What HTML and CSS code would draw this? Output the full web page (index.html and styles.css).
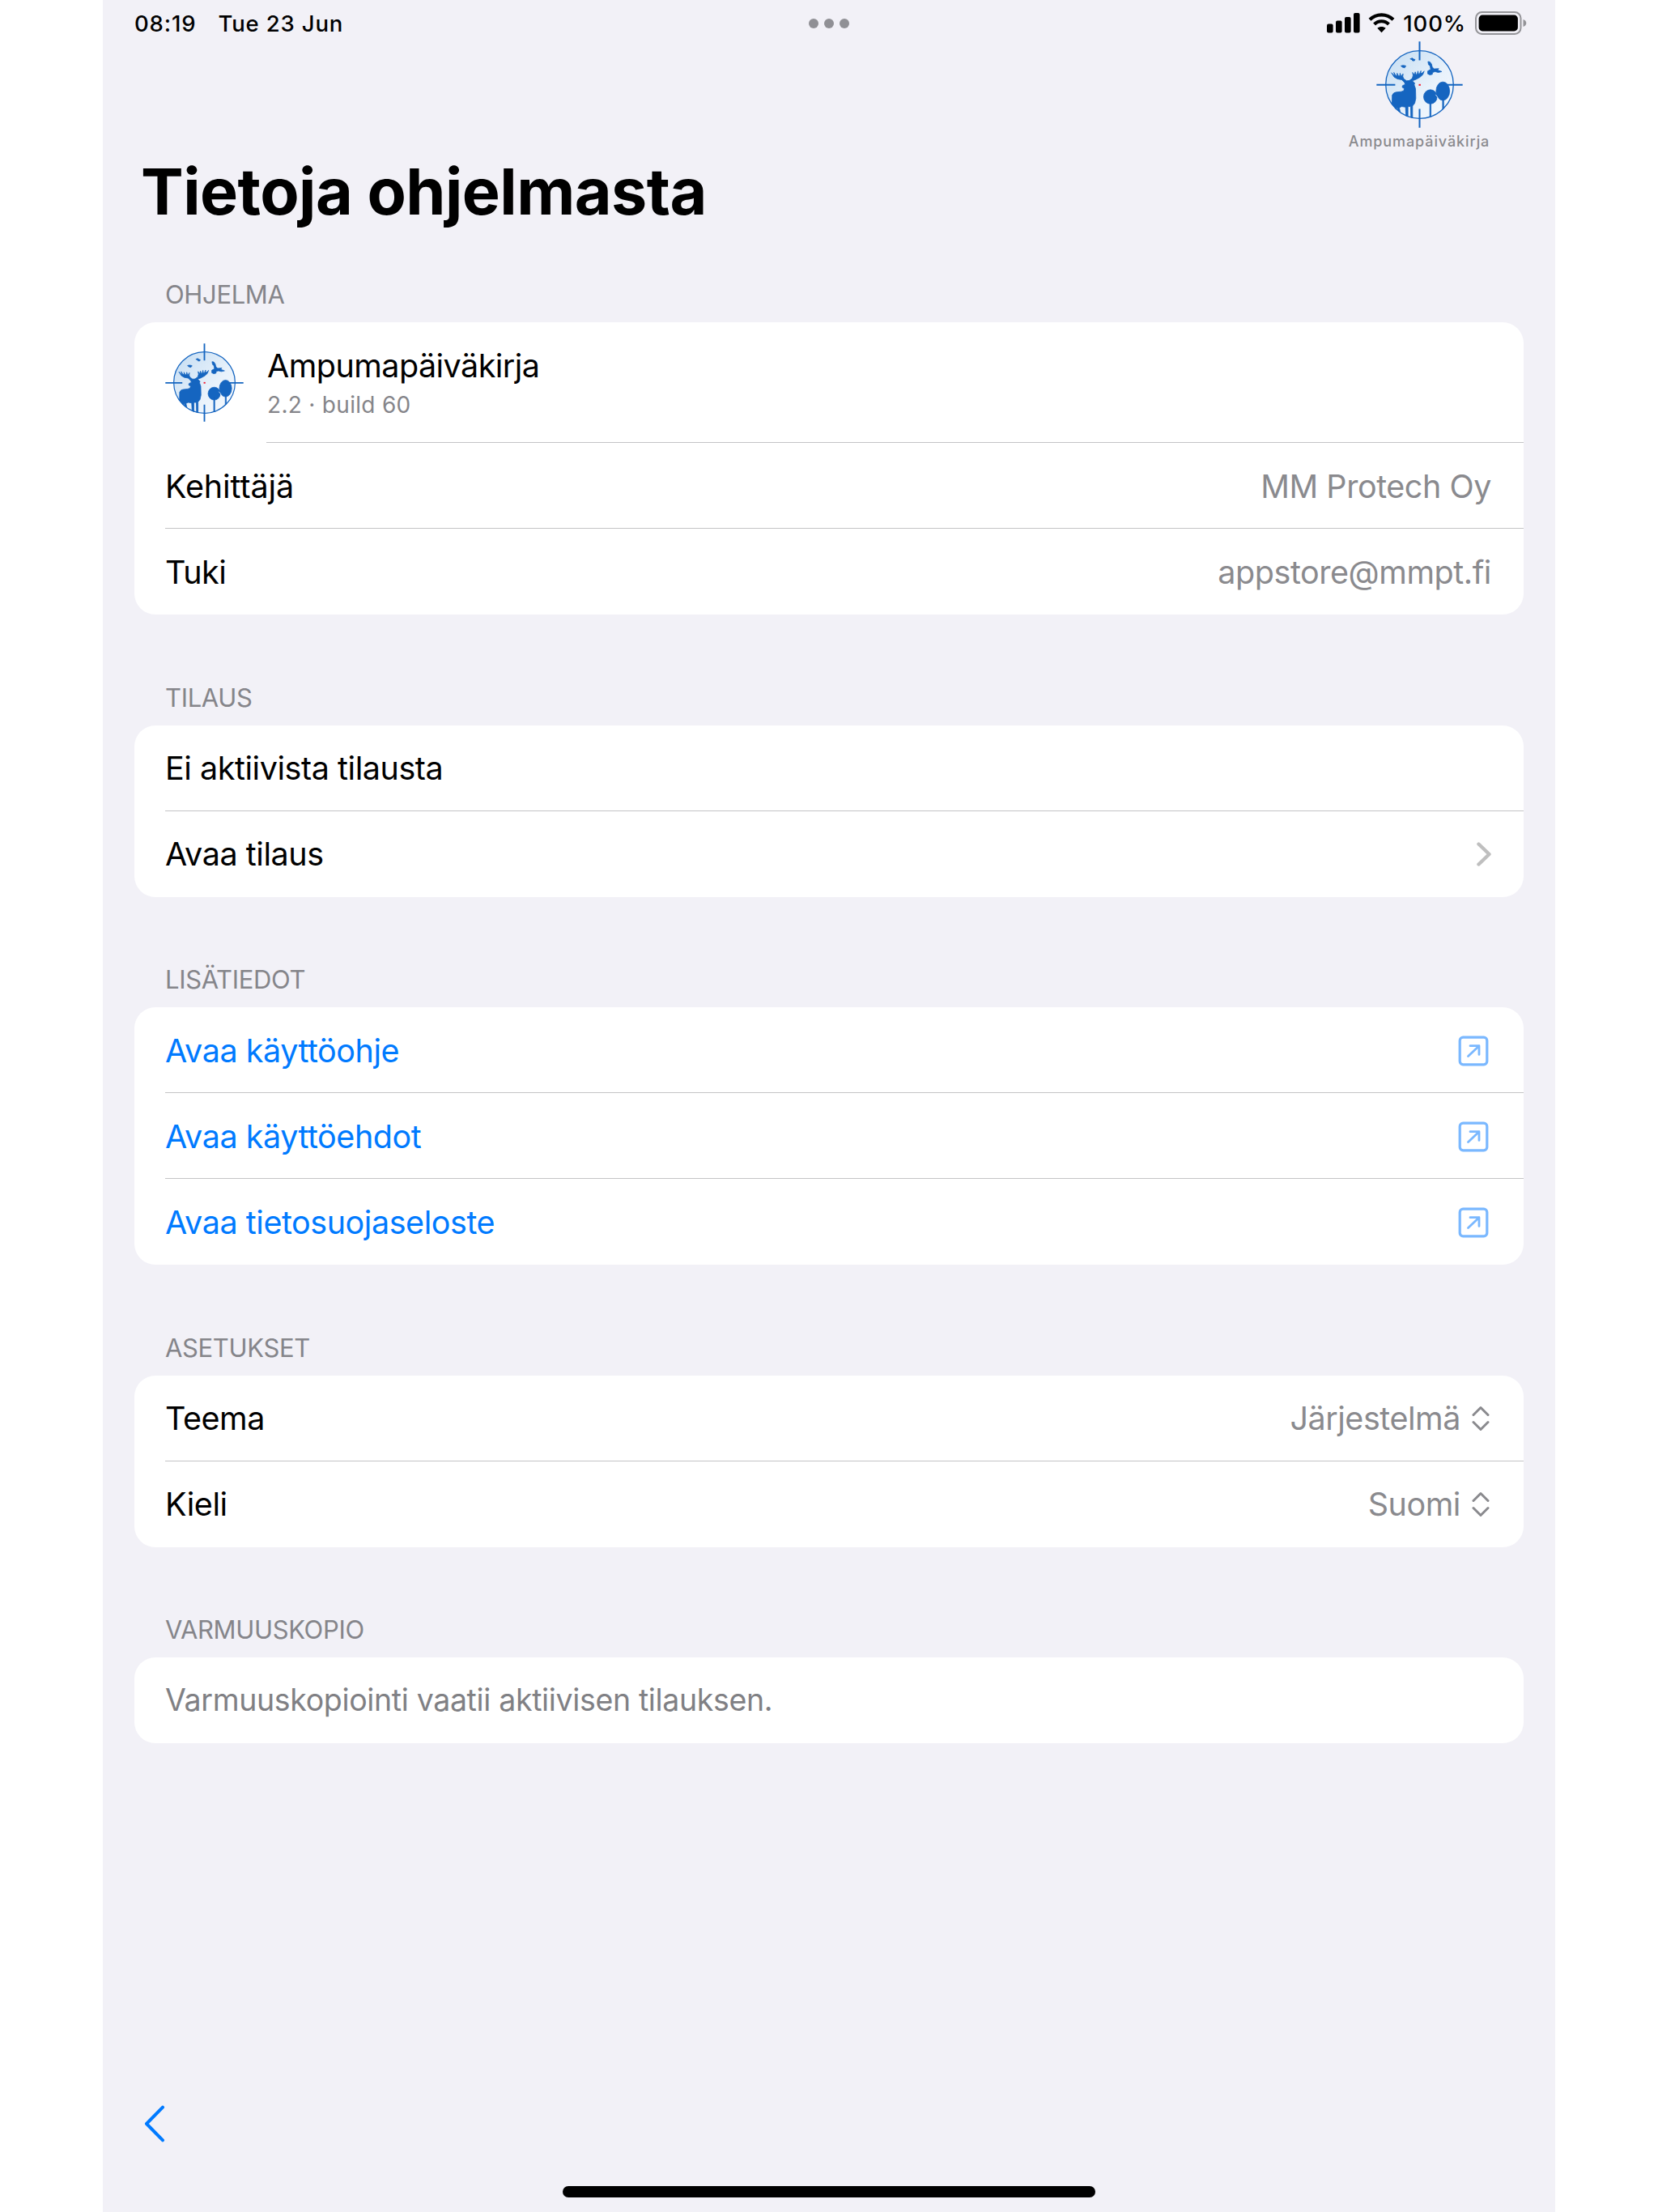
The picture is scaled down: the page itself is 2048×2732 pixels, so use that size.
FILE: index.html
```html
<!DOCTYPE html>
<html lang="fi">
  <head>
    <meta charset="UTF-8">
    <title>Ampumapäiväkirja</title>
    <link rel="stylesheet" href="styles.css">
  </head>
  <body>
    <!-- Shared icons -->
    <svg class="defs" width="0" height="0">
      <linearGradient id="sky" x1="0" y1="0" x2="1" y2="1">
        <stop offset="0" stop-color="#c3dcf2"/>
        <stop offset="0.6" stop-color="#e9f2fb"/>
        <stop offset="1" stop-color="#f6fafe"/>
      </linearGradient>
      <clipPath id="scope"><circle cx="190" cy="179" r="126"/></clipPath>
      <symbol id="logo" viewBox="30 19 320 320">
        <circle cx="190" cy="179" r="125" fill="url(#sky)" stroke="#1565c0" stroke-width="4"/>
        <g clip-path="url(#scope)" fill="#1565c0" stroke="#1565c0" stroke-width="2.5" stroke-linejoin="round">
          <!-- Moose -->
          <path d="M89 218 Q94 207 104 207 L122 205 L131 202 L134 194 L126 189 L127 183 L137 178 L134 171 L124 161 L108 158 L96 151 L86 135 L93 142 L98 147 L95 134 L102 145 L107 147 L107 137 L112 147 L117 147 L118 137 L122 149 L129 139 L128 150 L132 158 L142 165 L152 164 L163 156 L166 145 L164 134 L171 143 L174 132 L177 142 L181 141 L184 129 L186 140 L190 139 L195 128 L194 138 L200 136 L207 129 L202 142 L191 152 L176 160 L163 165 L172 174 L170 180 L175 194 L176 230 L172 248 L164 258 L164 302 L158 302 L157 260 L147 260 L147 300 L140 298 L138 262 L124 260 L115 264 L118 279 L111 277 L107 262 L100 284 L88 262 Z"/>
          <!-- Trees -->
          <ellipse cx="230" cy="224" rx="25" ry="26"/>
          <ellipse cx="276" cy="203" rx="25" ry="34"/>
          <rect x="228" y="240" width="4" height="70"/>
          <rect x="275" y="230" width="4" height="60"/>
          <path d="M249 216 L257 226 L256 232" fill="none" stroke="#e9f2fb"/>
          <!-- Birds -->
          <path d="M221 94 L228 95 L234 103 L237 115 L244 121 L261 120 L256 125 L272 131 L259 134 L247 131 L238 134 L237 141 L228 143 L220 139 L220 129 L231 123 L229 111 L223 105 Z"/>
          <path d="M121 110 L128 108 L136 109 L140 111 L136 114 L135 117 L127 115 Z"/>
          <path d="M155 84 L163 81 L168 85 L173 86 L171 91 L164 91 L162 87 Z"/>
        </g>
        <path d="M190 20V89M190 269V338M31 180H100M280 180H349" stroke="#1565c0" stroke-width="6"/>
        <rect x="187" y="177" width="7" height="6" fill="#f5142a"/>
      </symbol>
      <symbol id="external" viewBox="0 0 38 38">
        <rect x="2.2" y="2.2" width="33.6" height="33.6" rx="4" fill="none" stroke="#7ab8ff" stroke-width="3.2"/>
        <path d="M12.5 25.5 L26 12.7 M15 12.7 H26 V23.4" fill="none" stroke="#7ab8ff" stroke-width="2.8" stroke-linecap="round" stroke-linejoin="round"/>
      </symbol>
      <symbol id="updown" viewBox="0 0 22 32">
        <path d="M2 11.5 L11 2.5 L20 11.5 M2 20.5 L11 29.5 L20 20.5" fill="none" stroke="#8a8a8e" stroke-width="3" stroke-linecap="round" stroke-linejoin="round"/>
      </symbol>
    </svg>

    <div id="screen">
      <!-- Status bar -->
      <div class="status-bar">
        <div class="status-left">
          <span>08:19</span>
          <span>Tue 23 Jun</span>
        </div>
        <div class="dots"><i></i><i></i><i></i></div>
        <div class="status-right">
          <svg width="41" height="25" viewBox="0 0 41 25">
            <rect x="0" y="13.5" width="7.6" height="11" rx="2"/>
            <rect x="11" y="9.5" width="7.6" height="15" rx="2"/>
            <rect x="22" y="5" width="7.6" height="19.5" rx="2"/>
            <rect x="33" y="0" width="7.6" height="24.5" rx="2"/>
          </svg>
          <svg class="wifi" width="33" height="25" viewBox="0 0 33 25">
            <path d="M2 8.3 C10 .3 23 .3 31 8.3 M7.6 14 C12.5 9 20.5 9 25.4 14" fill="none" stroke="#000" stroke-width="4.2"/>
            <path d="M11.3 18.8 C14.3 16.3 18.7 16.3 21.7 18.8 L16.5 24.3 Z"/>
          </svg>
          <span>100%</span>
          <svg class="battery" width="64" height="29" viewBox="0 0 64 29">
            <rect x="1" y="1" width="55.5" height="27" rx="7.5" fill="none" stroke="#949498" stroke-width="2"/>
            <rect x="4.6" y="4.6" width="48.3" height="19.8" rx="4.5"/>
            <path d="M59.5 10 C64.5 11.5 64.5 17.5 59.5 19 Z" fill="#949498"/>
          </svg>
        </div>
      </div>

      <!-- Brand and page title -->
      <div class="header">
        <div class="brand">
          <svg class="brand-logo"><use href="#logo"/></svg>
          <span>Ampumapäiväkirja</span>
        </div>
        <h1>Tietoja ohjelmasta</h1>
      </div>

      <div class="section">
        <h2>OHJELMA</h2>
        <div class="card">
          <div class="app-row">
            <svg class="app-logo"><use href="#logo"/></svg>
            <div class="app-info">
              <span class="app-name">Ampumapäiväkirja</span>
              <span class="app-version">2.2 · build 60</span>
            </div>
          </div>
          <div class="row"><span class="developer">Kehittäjä</span><span class="value">MM Protech Oy</span></div>
          <div class="row"><span>Tuki</span><span class="value">appstore@mmpt.fi</span></div>
        </div>
      </div>

      <div class="section">
        <h2>TILAUS</h2>
        <div class="card">
          <div class="row"><span>Ei aktiivista tilausta</span></div>
          <div class="row">
            <span>Avaa tilaus</span>
            <svg width="18" height="30" viewBox="0 0 18 30">
              <path d="M2.5 2.5 L15.5 15 L2.5 27.5" fill="none" stroke="#bfbfbf" stroke-width="4.4" stroke-linecap="round" stroke-linejoin="round"/>
            </svg>
          </div>
        </div>
      </div>

      <div class="section">
        <h2>LISÄTIEDOT</h2>
        <div class="card">
          <div class="row link"><span>Avaa käyttöohje</span><svg class="external"><use href="#external"/></svg></div>
          <div class="row link"><span>Avaa käyttöehdot</span><svg class="external"><use href="#external"/></svg></div>
          <div class="row link"><span>Avaa tietosuojaseloste</span><svg class="external"><use href="#external"/></svg></div>
        </div>
      </div>

      <div class="section">
        <h2>ASETUKSET</h2>
        <div class="card">
          <div class="row"><span>Teema</span><span class="value">Järjestelmä <svg class="updown"><use href="#updown"/></svg></span></div>
          <div class="row"><span>Kieli</span><span class="value">Suomi <svg class="updown"><use href="#updown"/></svg></span></div>
        </div>
      </div>

      <div class="section">
        <h2>VARMUUSKOPIO</h2>
        <div class="card">
          <div class="row note"><span>Varmuuskopiointi vaatii aktiivisen tilauksen.</span></div>
        </div>
      </div>

      <!-- Bottom bar -->
      <div class="bottom">
        <svg class="back" width="26" height="46" viewBox="0 0 26 46">
          <path d="M23 2.7 L3 23 L23 43.3" fill="none" stroke="#007aff" stroke-width="4" stroke-linecap="round" stroke-linejoin="round"/>
        </svg>
        <div class="home-bar"></div>
      </div>
    </div>
  </body>
</html>
```
FILE: styles.css
```css
* {
  box-sizing: border-box;
  margin: 0;
  padding: 0;
}

body {
  background-color: #ffffff;
  font-family: Inter, "Liberation Sans", sans-serif;
  color: #000000;
}

svg {
  display: block;
  flex: none;
}

.defs {
  position: absolute;
}

#screen {
  display: flex;
  flex-direction: column;
  width: 1794px;
  height: 2732px;
  margin-left: 127px;
  padding: 0 39px;
  background-color: #f2f1f7;
}

/* Status bar */
.status-bar {
  display: grid;
  grid-template-columns: 1fr auto 1fr;
  align-items: center;
  height: 51px;
  padding-top: 6px;
  font-size: 27.5px;
  font-weight: 500;
  letter-spacing: 0.85px;
}

.status-left {
  display: flex;
  gap: 27px;
}

.dots {
  display: flex;
  gap: 7px;
}

.dots i {
  width: 12px;
  height: 12px;
  border-radius: 50%;
  background-color: #909095;
}

.status-right {
  display: flex;
  align-items: center;
  justify-content: flex-end;
  margin-right: -4px;
}

.wifi {
  margin: 0 10px;
}

.battery {
  margin-left: 11px;
}

/* Header */
.header {
  height: 289px;
}

.brand {
  display: flex;
  flex-direction: column;
  align-items: center;
  width: 180px;
  margin-left: 1497px;
  font-size: 18px;
  font-weight: 500;
  line-height: 22px;
  letter-spacing: 0.9px;
  color: #8a8a8e;
}

.brand-logo {
  width: 107px;
  height: 107px;
  margin-bottom: 6px;
}

h1 {
  margin: 2px 0 0 8px;
  font-size: 79px;
  font-weight: 700;
  line-height: 96px;
  letter-spacing: -0.55px;
}

/* Grouped lists */
.section {
  margin-bottom: 78.6px;
}

h2 {
  height: 58px;
  padding: 5px 0 0 38px;
  font-size: 31px;
  font-weight: 400;
  line-height: 38px;
  letter-spacing: -0.35px;
  color: #85858a;
}

.card {
  padding-left: 38px;
  border-radius: 26px;
  background-color: #ffffff;
}

.row {
  display: flex;
  align-items: center;
  justify-content: space-between;
  height: 106px;
  padding: 2px 40px 0 0;
  border-bottom: 1px solid #c4c4c6;
  font-size: 39.5px;
  letter-spacing: -0.45px;
}

.row:last-child {
  border-bottom-color: transparent;
}

.app-row {
  display: flex;
  height: 149px;
}

.app-logo {
  width: 97px;
  height: 97px;
  margin: 26px 28px 0 0;
}

.app-info {
  display: flex;
  flex: 1;
  flex-direction: column;
  padding-top: 30px;
  border-bottom: 1px solid #c4c4c6;
}

.app-name {
  padding-left: 1px;
  font-size: 39.5px;
  line-height: 48px;
  letter-spacing: -0.55px;
}

.app-version {
  padding-left: 1px;
  font-size: 28px;
  line-height: 48px;
  letter-spacing: 0.3px;
  color: #85858a;
}

.developer {
  letter-spacing: -0.1px;
}

.value {
  display: flex;
  align-items: center;
  gap: 14px;
  color: #8a8a8e;
}

.external {
  width: 38px;
  height: 38px;
  margin-right: 3px;
}

.updown {
  width: 22px;
  height: 32px;
  margin-right: 2px;
}

.link {
  color: #007aff;
}

.note {
  padding-top: 0;
  font-size: 37.5px;
  letter-spacing: -0.35px;
  color: #808084;
}

/* Bottom bar */
.bottom {
  margin-top: auto;
  padding-bottom: 18px;
}

.back {
  margin: 0 0 54px 12px;
}

.home-bar {
  width: 658px;
  height: 14px;
  margin: 0 auto;
  border-radius: 7px;
  background-color: #000000;
}
```
